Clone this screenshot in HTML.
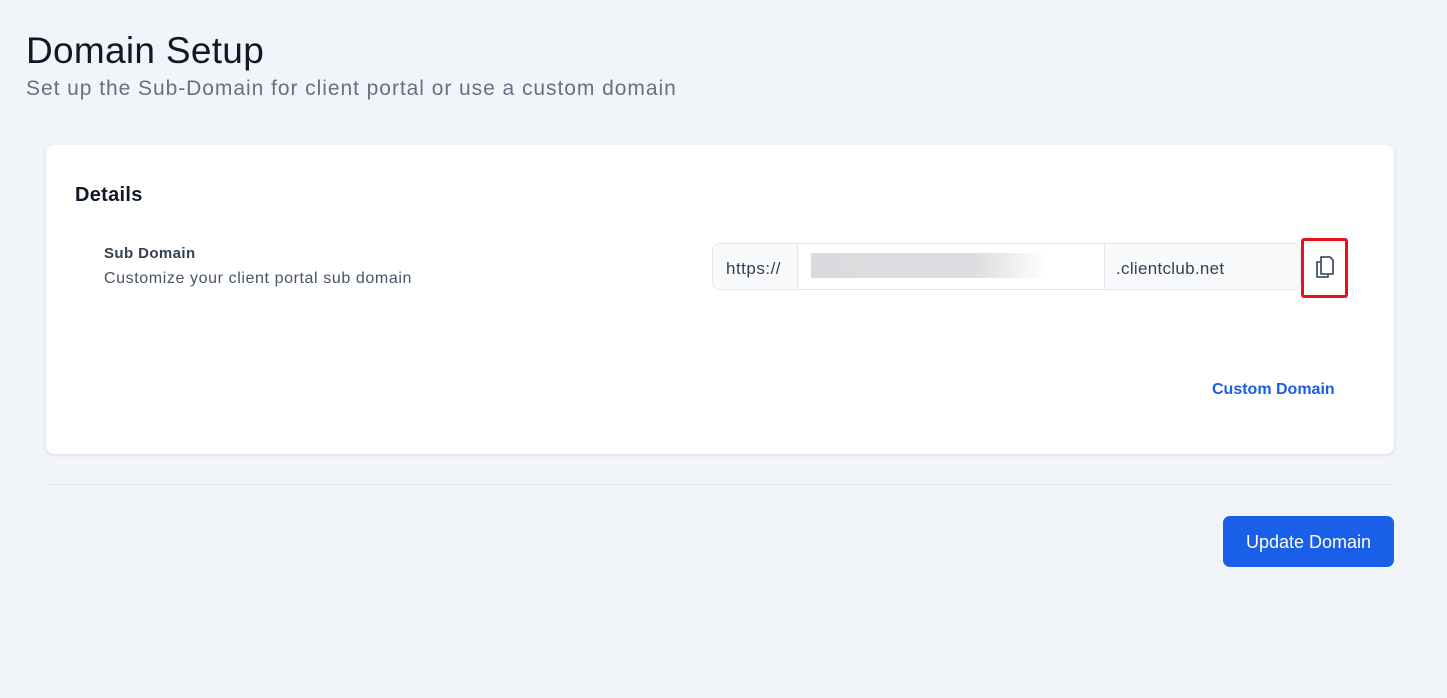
<!DOCTYPE html>
<html><head><style>
body{margin:0;width:1447px;height:698px;background:#f1f5f9;font-family:"Liberation Sans",sans-serif;position:relative;overflow:hidden}
.a{position:absolute}
</style></head><body>
<div class="a" style="left:26px;top:30px;font-size:37px;letter-spacing:0.3px;color:#101828">Domain Setup</div>
<div class="a" style="left:26px;top:77px;font-size:21px;letter-spacing:0.95px;color:#667085">Set up the Sub-Domain for client portal or use a custom domain</div>
<div class="a" style="left:46px;top:145px;width:1348px;height:309px;background:#fff;border-radius:8px;box-shadow:0 1px 3px rgba(0,0,0,.12)"></div>
<div class="a" style="left:75px;top:184px;font-size:20px;letter-spacing:0.3px;font-weight:bold;color:#101828">Details</div>
<div class="a" style="left:104px;top:245px;font-size:15px;letter-spacing:0.4px;font-weight:bold;color:#344054">Sub Domain</div>
<div class="a" style="left:104px;top:270px;font-size:16px;letter-spacing:0.6px;color:#475467">Customize your client portal sub domain</div>
<div class="a" style="left:712px;top:243px;width:589px;height:47px;border:1px solid #e4e7ec;border-radius:8px;background:#f9fafb;box-sizing:border-box"></div>
<div class="a" style="left:797px;top:244px;width:306px;height:45px;background:#fff;border-left:1px solid #e4e7ec;border-right:1px solid #e4e7ec"></div>
<div class="a" style="left:811px;top:253px;width:235px;height:25px;background:linear-gradient(90deg,#d9dbde 0%,#dcdde0 70%,#fff 100%)"></div>
<div class="a" style="left:726px;top:259px;font-size:17px;letter-spacing:0.5px;color:#344054">https://</div>
<div class="a" style="left:1116px;top:259px;font-size:17px;letter-spacing:0.3px;color:#344054">.clientclub.net</div>
<div class="a" style="left:1301px;top:238px;width:47px;height:60px;border:3px solid #e8121b;border-radius:3px;box-sizing:border-box"></div>
<svg class="a" style="left:1313px;top:253px" width="24" height="28" viewBox="0 0 24 28" fill="none" stroke="#475467" stroke-width="1.8" stroke-linejoin="round"><path d="M8 4h9l3 3v14h-12z"/><path d="M8 9h-4v15h11v-3"/></svg>
<div class="a" style="left:1212px;top:381px;font-size:16px;font-weight:bold;color:#1a5fe8">Custom Domain</div>
<div class="a" style="left:46px;top:484px;width:1348px;height:1px;background:#e4e7ec"></div>
<div class="a" style="left:1223px;top:516px;width:171px;height:51px;background:#1a5fe8;border-radius:7px;color:#fff;font-size:18px;line-height:52px;text-align:center">Update Domain</div>
</body></html>
